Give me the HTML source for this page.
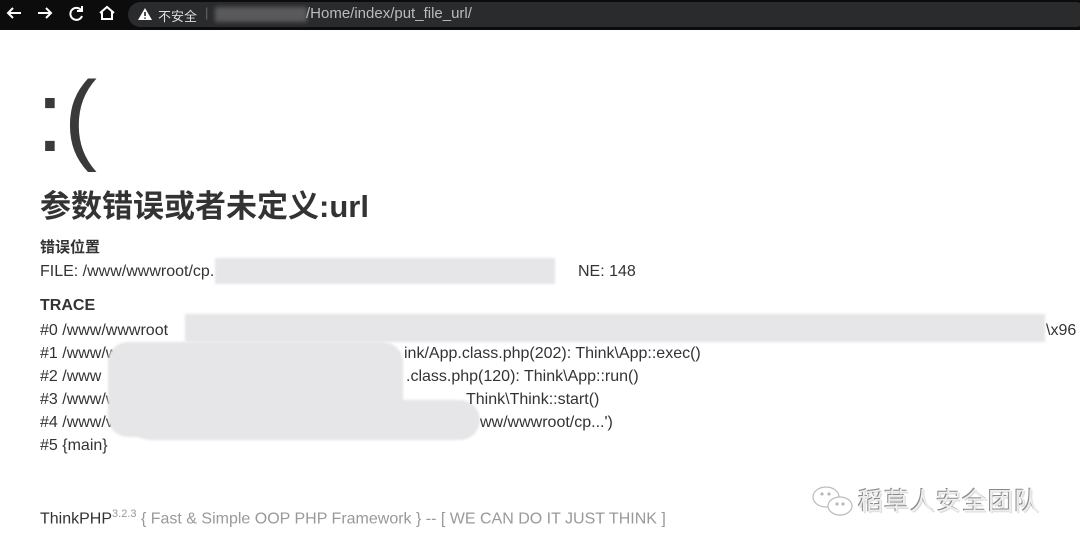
<!DOCTYPE html>
<html><head><meta charset="utf-8"><style>
body{margin:0;width:1080px;height:549px;overflow:hidden;background:#fff;font-family:"Liberation Sans","Noto Sans CJK SC",sans-serif;color:#333;position:relative}
.bar{position:absolute;left:0;top:0;width:1080px;height:30px;background:#0c0c0c}
.pill{position:absolute;left:128px;top:2px;width:960px;height:25px;background:#2a2b2d;border-radius:13px}
.t{position:absolute;white-space:nowrap}
.bl{position:absolute;background:#e6e6e8;filter:blur(1px)}
</style></head><body>
<div class="bar">
<svg width="128" height="30" style="position:absolute;left:0;top:0" fill="none" stroke="#fff" stroke-width="2">
<path d="M21 13H8M13 8l-5 5 5 5"/>
<path d="M38 13h13M46 8l5 5-5 5"/>
<path d="M81 10a6 6 0 1 0 1 6M82 6v5h-5"/>
<path d="M100 13l7-6 7 6M102 12v7h10v-7"/>
</svg>
<div class="pill"></div>
<svg width="16" height="14" style="position:absolute;left:137px;top:7px"><path d="M8 1L15 13H1Z" fill="#fff"/><path d="M8 5v4M8 10.5v1.2" stroke="#222" stroke-width="1.6"/></svg>
<div class="t" style="left:158px;top:6px;font-size:13px;color:#ddd">不安全</div>
<div class="t" style="left:205px;top:5px;font-size:13px;color:#666">|</div>
<div style="position:absolute;left:215px;top:7px;width:92px;height:15px;background:#5a5a5c;filter:blur(2px)"></div>
<div class="t" style="left:306px;top:5px;font-size:15px;color:#bbb">/Home/index/put_file_url/</div>
</div>
<div class="t" style="left:36px;top:62px;font-size:100px;line-height:110px;color:#3a3a3a">:(</div>
<div class="t" style="left:40px;top:187px;font-size:31px;font-weight:bold;line-height:40px">参数错误或者未定义:url</div>
<div class="t" style="left:40px;top:238px;font-size:15px;font-weight:bold;line-height:20px">错误位置</div>
<div class="t" style="left:40px;top:262px;font-size:16px;line-height:20px">FILE: /www/wwwroot/cp.</div>
<div class="bl" style="left:215px;top:258px;width:340px;height:26px"></div>
<div class="t" style="left:578px;top:262px;font-size:16px;line-height:20px">NE: 148</div>
<div class="t" style="left:40px;top:296px;font-size:16px;font-weight:bold;line-height:20px">TRACE</div>
<div style="font-size:16px;line-height:23px">
<div class="t" style="left:40px;top:319px">#0 /www/wwwroot</div>
<div class="t" style="left:40px;top:342px">#1 /www/w</div>
<div class="t" style="left:40px;top:365px">#2 /www</div>
<div class="t" style="left:40px;top:388px">#3 /www/ww</div>
<div class="t" style="left:40px;top:411px">#4 /www/v</div>
<div class="t" style="left:40px;top:434px">#5 {main}</div>
<div class="bl" style="left:185px;top:314px;width:860px;height:28px"></div>
<div class="t" style="left:1046px;top:319px">\x96</div>
<div class="bl" style="left:108px;top:342px;width:295px;height:95px;border-radius:20px"></div>
<div class="bl" style="left:130px;top:400px;width:350px;height:40px;border-radius:20px"></div>
<div class="t" style="left:404px;top:342px">ink/App.class.php(202): Think\App::exec()</div>
<div class="t" style="left:406px;top:365px">.class.php(120): Think\App::run()</div>
<div class="t" style="left:466px;top:388px">Think\Think::start()</div>
<div class="t" style="left:480px;top:411px">ww/wwwroot/cp...')</div>
</div>
<div class="t" style="left:40px;top:503px;font-size:16px;line-height:22px">ThinkPHP<sup style="font-size:11px;color:#999">3.2.3</sup> <span style="color:#999">{ Fast &amp; Simple OOP PHP Framework } -- [ WE CAN DO IT JUST THINK ]</span></div>
<svg width="46" height="36" style="position:absolute;left:810px;top:484px" fill="none" stroke="#bbb" stroke-width="1.2"><ellipse cx="16" cy="13" rx="13" ry="10"/><ellipse cx="30" cy="22" rx="12" ry="9" fill="#fff"/><circle cx="12" cy="10" r="1" fill="#999"/><circle cx="19" cy="10" r="1" fill="#999"/><circle cx="27" cy="20" r="1" fill="#999"/><circle cx="33" cy="20" r="1" fill="#999"/></svg>
<div class="t" style="left:858px;top:486px;font-size:25px;color:#eee;text-shadow:-1px -1px 0 #888,1px 1px 0 #ddd;letter-spacing:1px;line-height:32px">稻草人安全团队</div>
</body></html>
